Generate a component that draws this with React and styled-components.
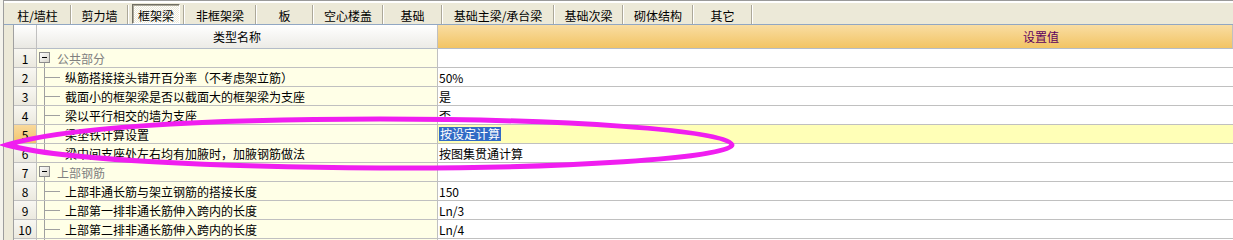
import React from "react";
import styled, { createGlobalStyle } from "styled-components";

const GlobalStyle = createGlobalStyle`
  html, body {
    margin: 0;
    padding: 0;
    background: #ece9d8;
  }
  body {
    font-family: "Noto Sans CJK SC", "Noto Sans", sans-serif;
    font-size: 12px;
    color: #000;
  }
`;

const Page = styled.div`
  position: relative;
  width: 1233px;
  height: 100vh;
  min-height: 216px;
  overflow: hidden;
  display: flex;
  background: #ece9d8;
`;

const FrameEdge = styled.div`
  width: 3px;
  flex: none;
  background: #f4f3ec;
  border-right: 1px solid #9d9d9d;
`;

const Body = styled.div`
  flex: 1;
  display: flex;
  flex-direction: column;
  min-width: 0;
`;

const TopStrip = styled.div`
  height: 4px;
  border-bottom: 1px solid #9a9a9a;
  display: flex;
  align-items: flex-end;
  gap: 3px;
  padding-left: 58px;
  overflow: hidden;
`;

const TopTab = styled.div`
  flex: none;
  width: ${(p) => p.$w}px;
  height: 20px;
  box-sizing: border-box;
  border: 1px solid #8f8f8f;
  border-bottom: none;
  background: #fff;
  text-align: center;
  line-height: 18px;
  padding-top: 4px;
`;

const TabBar = styled.div`
  height: 30px;
  box-sizing: border-box;
  border-top: 2px solid #fff;
  border-bottom: 1px solid #91a7c3;
  display: flex;
  align-items: flex-start;
  padding-top: 1px;
`;

const Tab = styled.div`
  position: relative;
  flex: none;
  width: ${(p) => p.$w}px;
  height: 20px;
  display: flex;
  align-items: stretch;
  justify-content: center;
  box-sizing: border-box;
  padding: 0 ${(p) => (p.$active ? 4 : 0)}px;

  &::after {
    content: "";
    position: absolute;
    right: 0;
    top: 1px;
    bottom: 0;
    width: 1px;
    background: #aca899;
    box-shadow: 1px 0 0 #fff;
  }
`;

const TabLabel = styled.span`
  flex: 1;
  display: flex;
  align-items: center;
  justify-content: center;
  white-space: nowrap;
  box-sizing: border-box;
  padding-top: 2px;
  ${(p) =>
    p.$active
      ? `
    border-top: 1px solid #716f64;
    border-left: 1px solid #716f64;
    border-right: 1px solid #fff;
    border-bottom: 1px solid #fff;
    box-shadow: inset 1px 1px 0 #aca899;
    background-color: #f6f5f0;
    background-image: repeating-conic-gradient(#ffffff 0 25%, #ece9d8 0 50%);
    background-size: 2px 2px;
  `
      : ""}
`;

const TableWrap = styled.div`
  padding-left: 9px;
`;

const Grid = styled.div`
  display: grid;
  grid-template-columns: 23px 401px 1fr;
  grid-auto-rows: 19px;
  grid-template-rows: 24px;
  border-left: 1px solid #a0a0a0;
  background: #fff;
`;

const Cell = styled.div`
  box-sizing: border-box;
  border-right: 1px solid #c0c0c0;
  border-bottom: 1px solid #c0c0c0;
  display: flex;
  align-items: center;
  white-space: nowrap;
  overflow: hidden;
`;

const CornerCell = styled(Cell)`
  background: linear-gradient(#ffffff, #e9e8e2);
`;

const HeadCell = styled(Cell)`
  justify-content: ${(p) => (p.$indent ? "flex-start" : "center")};
  padding-left: ${(p) => p.$indent || 0}px;
  color: ${(p) => p.$color || "#000"};
  background: ${(p) =>
    p.$orange
      ? "linear-gradient(#f9dda2, #f2c464)"
      : "linear-gradient(#ffffff, #ecebe6)"};
  border-bottom-color: #b4bcc8;
`;

const NumCell = styled(Cell)`
  justify-content: center;
  background: ${(p) =>
    p.$current
      ? "linear-gradient(#f9d99c, #f2c46c)"
      : "linear-gradient(#f8f7f2, #ebe9df)"};
`;

const NameCell = styled(Cell)`
  background: #ffffe7;
  color: ${(p) => (p.$group ? "#808080" : "#000")};
`;

const ValueCell = styled(Cell)`
  border-right: none;
  padding-left: 1px;
  background: ${(p) => (p.$current ? "#ffffb7" : "#fff")};
`;

const Selected = styled.span`
  background: #316ac5;
  color: #fff;
  padding: 0 1px;
  line-height: 14px;
`;

const Indent = styled.span`
  display: inline-block;
  width: 4px;
`;

const Overlay = styled.svg`
  position: absolute;
  left: 0;
  top: 0;
  pointer-events: none;
`;

const GroupNode = () => (
  <svg width="20" height="18" style={{ flex: "none" }}>
    <defs>
      <linearGradient id="nodeFill" x1="0" y1="0" x2="1" y2="1">
        <stop offset="0" stopColor="#ffffff" />
        <stop offset="1" stopColor="#d6d3c8" />
      </linearGradient>
    </defs>
    <rect x="2.5" y="3.5" width="10" height="10" fill="url(#nodeFill)" stroke="#8c8c8c" />
    <line x1="5" y1="8.5" x2="10" y2="8.5" stroke="#000" />
    <line x1="7.5" y1="14" x2="7.5" y2="18" stroke="#a0a0a0" />
  </svg>
);

const ChildNode = ({ last }) => (
  <svg width="24" height="18" style={{ flex: "none" }}>
    <line x1="7.5" y1="0" x2="7.5" y2={last ? 9.5 : 18} stroke="#a0a0a0" />
    <line x1="8" y1="9.5" x2="23" y2="9.5" stroke="#a0a0a0" />
  </svg>
);

const topTabs = [
  { label: "计算设置", w: 62 },
  { label: "节点设置", w: 58 },
  { label: "箍筋设置", w: 57 },
  { label: "搭接设置", w: 58 },
];

const tabs = [
  { label: "柱/墙柱", w: 67 },
  { label: "剪力墙", w: 57 },
  { label: "框架梁", w: 56, active: true },
  { label: "非框架梁", w: 72 },
  { label: "板", w: 57 },
  { label: "空心楼盖", w: 70 },
  { label: "基础", w: 59 },
  { label: "基础主梁/承台梁", w: 112 },
  { label: "基础次梁", w: 69 },
  { label: "砌体结构", w: 70 },
  { label: "其它", w: 59 },
];

const rows = [
  { n: 1, group: true, name: "公共部分" },
  { n: 2, name: "纵筋搭接接头错开百分率（不考虑架立筋）", value: "50%" },
  { n: 3, name: "截面小的框架梁是否以截面大的框架梁为支座", value: "是" },
  { n: 4, name: "梁以平行相交的墙为支座", value: "否" },
  { n: 5, name: "梁垫铁计算设置", value: "按设定计算", current: true },
  { n: 6, name: "梁中间支座处左右均有加腋时，加腋钢筋做法", value: "按图集贯通计算", last: true },
  { n: 7, group: true, name: "上部钢筋" },
  { n: 8, name: "上部非通长筋与架立钢筋的搭接长度", value: "150" },
  { n: 9, name: "上部第一排非通长筋伸入跨内的长度", value: "Ln/3" },
  { n: 10, name: "上部第二排非通长筋伸入跨内的长度", value: "Ln/4" },
  { n: 11, name: "上部第三排非通长筋伸入跨内的长度", value: "Ln/5" },
];

const App = () => {
  return (
    <Page>
      <GlobalStyle />
      <FrameEdge />
      <Body>
        <TopStrip>
          {topTabs.map((t) => (
            <TopTab key={t.label} $w={t.w}>
              {t.label}
            </TopTab>
          ))}
        </TopStrip>
        <TabBar>
          {tabs.map((t) => (
            <Tab key={t.label} $w={t.w} $active={t.active}>
              <TabLabel $active={t.active}>{t.label}</TabLabel>
            </Tab>
          ))}
        </TabBar>
        <TableWrap>
          <Grid>
            <CornerCell />
            <HeadCell>类型名称</HeadCell>
            <HeadCell $orange $indent={585} $color="#5e005e">
              设置值
            </HeadCell>
            {rows.map((r) => (
              <React.Fragment key={r.n}>
                <NumCell $current={r.current}>{r.n}</NumCell>
                <NameCell $group={r.group}>
                  {r.group ? <GroupNode /> : <ChildNode last={r.last} />}
                  {!r.group && <Indent />}
                  {r.name}
                </NameCell>
                <ValueCell $current={r.current}>
                  {r.current ? <Selected>{r.value}</Selected> : r.value}
                </ValueCell>
              </React.Fragment>
            ))}
          </Grid>
        </TableWrap>
      </Body>
      <Overlay width="1233" height="216">
        <path
          d="M 7 145 C 60 128, 200 119, 380 119 C 560 119, 732 130, 732 145 C 732 158, 560 169, 380 168 C 220 167, 60 160, 7 145 Z"
          fill="none"
          stroke="#f01ef0"
          strokeWidth="5"
        />
      </Overlay>
    </Page>
  );
};

export default App;
